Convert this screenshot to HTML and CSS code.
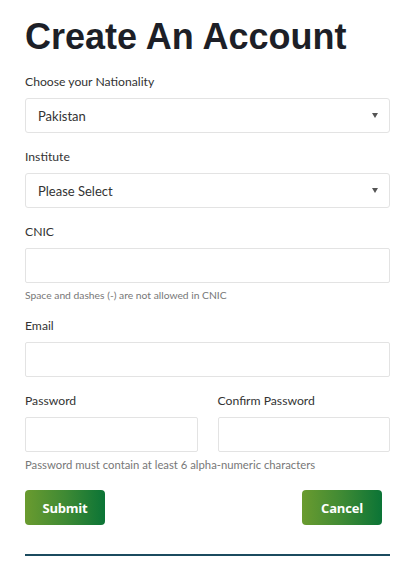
FILE: index.html
```html
<!DOCTYPE html>
<html lang="en">
<head>
<meta charset="utf-8">
<title>Create An Account</title>
<link rel="stylesheet" href="styles.css">
</head>
<body>
<div class="page">
  <h1 class="title">Create An Account</h1>
  <form class="form">
    <div class="field">
      <label class="label">Choose your Nationality</label>
      <div class="select"><span>Pakistan</span><span class="arrow"></span></div>
    </div>
    <div class="field">
      <label class="label">Institute</label>
      <div class="select"><span>Please Select</span><span class="arrow"></span></div>
    </div>
    <div class="field">
      <label class="label">CNIC</label>
      <div class="input"></div>
      <p class="help help-sm">Space and dashes (-) are not allowed in CNIC</p>
    </div>
    <div class="field">
      <label class="label">Email</label>
      <div class="input"></div>
    </div>
    <div class="field">
      <div class="row">
        <div class="col">
          <label class="label">Password</label>
          <div class="input"></div>
        </div>
        <div class="col">
          <label class="label">Confirm Password</label>
          <div class="input"></div>
        </div>
      </div>
      <p class="help help-lg">Password must contain at least 6 alpha-numeric characters</p>
    </div>
    <div class="actions">
      <button type="button" class="btn">Submit</button>
      <button type="button" class="btn">Cancel</button>
    </div>
  </form>
  <div class="rule"></div>
</div>
</body>
</html>
```
FILE: styles.css
```css
html, body { margin: 0; padding: 0; background: #fff; }
body { font-family: Lato, "Open Sans", sans-serif; color: #333; }
.page { padding: 17px 27px 0 25px; }
.title {
  font-family: "Liberation Sans", Arial, sans-serif;
  font-weight: 700;
  font-size: 36px;
  line-height: 40px;
  color: #1d1f27;
  margin: 0 0 17px 0;
}
.form { display: flex; flex-direction: column; }
.field { display: flex; flex-direction: column; margin-bottom: 16px; }
.label { font-size: 12.2px; line-height: 16px; color: #333; margin-bottom: 8px; }
.select, .input {
  box-sizing: border-box;
  height: 35px;
  border: 1px solid #e3e3e3;
  border-radius: 2px;
  background: #fff;
}
.select {
  display: flex;
  align-items: center;
  justify-content: space-between;
  padding: 0 11px 0 12px;
  font-size: 13px;
  color: #333;
  border-radius: 3px;
}
.arrow {
  width: 0; height: 0;
  border-left: 3px solid transparent;
  border-right: 3px solid transparent;
  border-top: 5px solid #555;
}
.help { margin: 6px 0 0 0; line-height: 13px; color: #777; }
.help-sm { font-size: 10.3px; }
.help-lg { font-size: 11.3px; }
.row { display: flex; gap: 20px; }
.col { flex: 1; display: flex; flex-direction: column; }
.actions { display: flex; justify-content: space-between; padding-right: 8px; margin-top: 3px; }
.btn {
  width: 80px; height: 35px;
  border: 0; border-radius: 4px;
  background: linear-gradient(90deg, #6a9b2f 0%, #3f8a34 50%, #0b7436 100%);
  color: #fff;
  font-family: "Open Sans", Lato, sans-serif;
  font-weight: 700;
  font-size: 13px;
  letter-spacing: -0.2px;
}
.rule { margin-top: 29px; height: 2px; background: #1b4b5f; }
```
